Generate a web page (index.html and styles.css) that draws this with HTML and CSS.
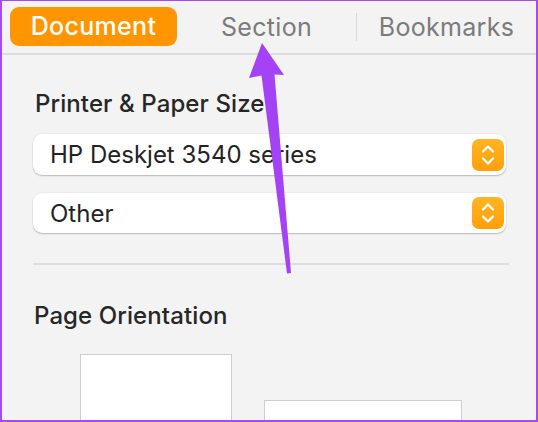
FILE: index.html
```html
<!DOCTYPE html>
<html lang="en">
<head>
<meta charset="utf-8">
<title>Document Setup</title>
<link rel="stylesheet" href="styles.css">
</head>
<body>
<div class="frame">
  <div class="tabs">
    <div class="tab tab-active">Document</div>
    <div class="tab">Section</div>
    <div class="tab-divider"></div>
    <div class="tab">Bookmarks</div>
  </div>

  <div class="panel">
    <h2 class="heading heading-printer">Printer &amp; Paper Size</h2>

    <div class="popup">
      <span class="popup-label">HP Deskjet 3540 series</span>
      <span class="stepper">
        <svg width="14" height="22" viewBox="0 0 14 22"><path d="M2 7.5 L7 2.5 L12 7.5 M2 14.5 L7 19.5 L12 14.5" fill="none" stroke="#fff" stroke-width="2.2" stroke-linecap="round" stroke-linejoin="round"/></svg>
      </span>
    </div>

    <div class="popup popup-second">
      <span class="popup-label">Other</span>
      <span class="stepper">
        <svg width="14" height="22" viewBox="0 0 14 22"><path d="M2 7.5 L7 2.5 L12 7.5 M2 14.5 L7 19.5 L12 14.5" fill="none" stroke="#fff" stroke-width="2.2" stroke-linecap="round" stroke-linejoin="round"/></svg>
      </span>
    </div>

    <div class="separator"></div>

    <h2 class="heading heading-orientation">Page Orientation</h2>

    <div class="orientations">
      <div class="sheet sheet-portrait"></div>
      <div class="sheet sheet-landscape"></div>
    </div>
  </div>

  <!-- callout arrow pointing at the Section tab -->
  <svg class="callout" width="538" height="422" viewBox="0 0 538 422">
    <path d="M262 43 L249 78 L261.5 75.5 L287 273.5 L291 273 L274.5 74.5 L284 75 Z" fill="#a442f6"/>
  </svg>
</div>
</body>
</html>
```

FILE: styles.css
```css
* {
  box-sizing: border-box;
}

html, body {
  margin: 0;
  padding: 0;
}

body {
  font-family: Inter, "Noto Sans", "DejaVu Sans", sans-serif;
  background: #f3f3f3;
}

.frame {
  position: relative;
  width: 538px;
  height: 422px;
  overflow: hidden;
  background: #f3f3f3;
  border: 2px solid #a64af2;
  border-top-width: 1px;
}

/* ---- tab bar ---- */
.tabs {
  display: flex;
  align-items: center;
  height: 54px;
  padding-left: 8px;
  border-bottom: 2px solid #dcdcdc;
}

.tab {
  flex: 1;
  text-align: center;
  font-size: 25px;
  color: #7b7b7b;
  letter-spacing: 0.3px;
}

.tab-active {
  flex: 0 0 167px;
  height: 39px;
  margin-bottom: 1px;
  line-height: 39px;
  background: #ff9500;
  color: #fff;
  border-radius: 9px;
  font-weight: 500;
}

.tab-divider {
  width: 1px;
  height: 28px;
  background: #d6d6d6;
}

/* ---- panel ---- */
.panel {
  padding-left: 31px;
}

.heading {
  margin: 0;
  font-size: 24px;
  line-height: 28px;
  font-weight: 500;
  color: #262626;
  letter-spacing: 0.1px;
}

.heading-printer {
  margin-top: 35px;
  margin-left: 2px;
}

.popup {
  display: flex;
  align-items: center;
  justify-content: space-between;
  width: 473px;
  height: 41px;
  margin-top: 16px;
  padding: 0 2px 0 17px;
  background: #fff;
  border-radius: 9px;
  box-shadow: 0 1px 1.5px rgba(0, 0, 0, 0.22), 0 0 0 0.5px rgba(0, 0, 0, 0.05);
}

.popup-second {
  height: 40px;
  margin-top: 18px;
}

.popup-label {
  font-size: 24px;
  color: #232323;
}

.stepper {
  display: flex;
  align-items: center;
  justify-content: center;
  width: 32px;
  height: 32px;
  border-radius: 7px;
  background: linear-gradient(#ffb524, #ff9f0a);
}

.separator {
  width: 476px;
  height: 2px;
  margin-top: 30px;
  background: #dedede;
}

.heading-orientation {
  margin-top: 37px;
  margin-left: 1px;
}

.orientations {
  display: flex;
  align-items: flex-start;
  gap: 32px;
  margin-top: 24px;
  padding-left: 47px;
}

.sheet {
  background: #fff;
  border: 1px solid #cfcfcf;
}

.sheet-portrait {
  width: 152px;
  height: 120px;
}

.sheet-landscape {
  width: 198px;
  height: 80px;
  margin-top: 46px;
}

/* annotation overlay */
.callout {
  position: absolute;
  left: -2px;
  top: -1px;
  pointer-events: none;
}
```
